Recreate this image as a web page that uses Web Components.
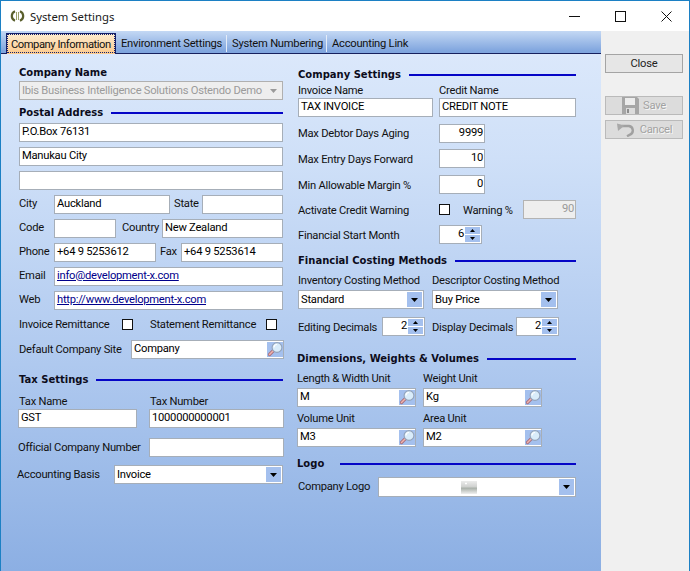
<!DOCTYPE html>
<html><head><meta charset="utf-8"><style>
html,body{margin:0;padding:0;height:100%;overflow:hidden}
body{font:11.2px Roboto,"Liberation Sans",Arial,sans-serif;color:#111}
f-lab.lift{margin-bottom:2px}
f-lab.drop{margin-top:2px}
</style></head><body>
<sys-window>
  <win-title slot="title">System Settings</win-title>
  <tab-bar slot="tabs">
    <tab-item active style="width:110px">Company Information</tab-item><tab-item style="width:111px">Environment Settings</tab-item><tab-item style="width:100px">System Numbering</tab-item><tab-item last style="width:90px">Accounting Link</tab-item>
  </tab-bar>
  <form-col slot="left" style="width:266px;margin-left:17px;padding-top:12px">
    <sec-head style="margin-left:1px">Company Name</sec-head>
    <f-row style="margin-top:2px"><combo-box disabled style="width:264px;margin-left:1px" value="Ibis Business Intelligence Solutions Ostendo Demo"></combo-box></f-row>
    <sec-head line style="margin-top:6px;margin-left:1px;width:264px" gap="8">Postal Address</sec-head>
    <f-row style="margin-top:4px"><text-field style="width:264px;margin-left:1px" value="P.O.Box 76131"></text-field></f-row>
    <f-row style="margin-top:5px"><text-field style="width:264px;margin-left:1px" value="Manukau City"></text-field></f-row>
    <f-row style="margin-top:5px"><text-field style="width:264px;margin-left:1px"></text-field></f-row>
    <f-row style="margin-top:5px"><f-lab class="lift" style="width:35px;margin-left:1px">City</f-lab><text-field style="width:116px" value="Auckland"></text-field><f-lab class="lift" style="width:28px;margin-left:4px">State</f-lab><text-field style="width:81px"></text-field></f-row>
    <f-row style="margin-top:5px"><f-lab class="lift" style="width:35px;margin-left:1px">Code</f-lab><text-field style="width:62px"></text-field><f-lab class="lift" style="width:40px;margin-left:6px">Country</f-lab><text-field style="width:121px" value="New Zealand"></text-field></f-row>
    <f-row style="margin-top:5px"><f-lab class="lift" style="width:35px;margin-left:1px">Phone</f-lab><text-field style="width:102px" value="+64 9 5253612"></text-field><f-lab class="lift" style="width:21px;margin-left:4px">Fax</f-lab><text-field style="width:102px" value="+64 9 5253614"></text-field></f-row>
    <f-row style="margin-top:5px"><f-lab class="lift" style="width:35px;margin-left:1px">Email</f-lab><text-field link style="width:229px" value="info@development-x.com"></text-field></f-row>
    <f-row style="margin-top:5px"><f-lab class="lift" style="width:35px;margin-left:1px">Web</f-lab><text-field link style="width:229px" value="http://www.development-x.com"></text-field></f-row>
    <f-row style="margin-top:5px"><f-lab style="width:103px;margin-left:1px">Invoice Remittance</f-lab><check-box></check-box><f-lab style="width:116px;margin-left:17px">Statement Remittance</f-lab><check-box></check-box></f-row>
    <f-row style="margin-top:6px"><f-lab style="width:112px;margin-left:1px">Default Company Site</f-lab><lookup-field style="width:153px" value="Company"></lookup-field></f-row>
    <sec-head line style="margin-top:14px;margin-left:1px;width:264px" gap="8">Tax Settings</sec-head>
    <f-row style="margin-top:8px;height:14px;margin-left:1px"><f-lab style="width:131px">Tax Name</f-lab><f-lab>Tax Number</f-lab></f-row>
    <f-row style="margin-top:1px"><text-field style="width:119px" value="GST"></text-field><text-field style="width:135px;margin-left:12px" value="1000000000001"></text-field></f-row>
    <f-row style="margin-top:10px"><f-lab style="width:131px">Official Company Number</f-lab><text-field style="width:135px"></text-field></f-row>
    <f-row style="margin-top:8px"><f-lab style="width:97px;margin-left:-1px">Accounting Basis</f-lab><combo-box style="width:169px" value="Invoice"></combo-box></f-row>
  </form-col>
  <form-col slot="right" style="width:280px;margin-left:14px;padding-top:14px">
    <sec-head line style="width:278px" gap="8">Company Settings</sec-head>
    <f-row style="margin-top:2px;height:14px"><f-lab style="width:141px">Invoice Name</f-lab><f-lab>Credit Name</f-lab></f-row>
    <f-row style="margin-top:1px"><text-field style="width:135px" value="TAX INVOICE"></text-field><text-field style="width:137px;margin-left:6px" value="CREDIT NOTE"></text-field></f-row>
    <f-row style="margin-top:7px"><f-lab style="width:141px">Max Debtor Days Aging</f-lab><text-field num style="width:46px" value="9999"></text-field></f-row>
    <f-row style="margin-top:6px"><f-lab class="drop" style="width:141px">Max Entry Days Forward</f-lab><text-field num style="width:46px" value="10"></text-field></f-row>
    <f-row style="margin-top:7px"><f-lab class="drop" style="width:141px">Min Allowable Margin %</f-lab><text-field num style="width:46px" value="0"></text-field></f-row>
    <f-row style="margin-top:6px"><f-lab class="drop" style="width:141px">Activate Credit Warning</f-lab><check-box></check-box><f-lab class="drop" style="width:60px;margin-left:13px">Warning %</f-lab><text-field num disabled style="width:53px" value="90"></text-field></f-row>
    <f-row style="margin-top:6px"><f-lab class="drop" style="width:141px">Financial Start Month</f-lab><spin-box style="width:43px" value="6"></spin-box></f-row>
    <sec-head line style="margin-top:10px;width:278px" gap="8">Financial Costing Methods</sec-head>
    <f-row style="margin-top:6px;height:14px"><f-lab style="width:134px">Inventory Costing Method</f-lab><f-lab>Descriptor Costing Method</f-lab></f-row>
    <f-row style="margin-top:3px"><combo-box style="width:126px" value="Standard"></combo-box><combo-box style="width:126px;margin-left:8px" value="Buy Price"></combo-box></f-row>
    <f-row style="margin-top:8px"><f-lab class="drop" style="width:84px">Editing Decimals</f-lab><spin-box style="width:43px" value="2"></spin-box><f-lab class="drop" style="width:84px;margin-left:7px">Display Decimals</f-lab><spin-box style="width:43px" value="2"></spin-box></f-row>
    <sec-head line style="margin-top:16px;width:279px;margin-left:-1px" gap="8">Dimensions, Weights &amp; Volumes</sec-head>
    <f-row style="margin-top:6px;height:14px;margin-left:-1px"><f-lab style="width:126px">Length &amp; Width Unit</f-lab><f-lab>Weight Unit</f-lab></f-row>
    <f-row style="margin-top:3px;margin-left:-1px"><lookup-field style="width:119px" value="M"></lookup-field><lookup-field style="width:119px;margin-left:7px" value="Kg"></lookup-field></f-row>
    <f-row style="margin-top:4px;height:14px;margin-left:-1px"><f-lab style="width:126px">Volume Unit</f-lab><f-lab>Area Unit</f-lab></f-row>
    <f-row style="margin-top:3px;margin-left:-1px"><lookup-field style="width:119px" value="M3"></lookup-field><lookup-field style="width:119px;margin-left:7px" value="M2"></lookup-field></f-row>
    <sec-head line style="margin-top:10px;width:279px;margin-left:-1px" gap="16">Logo</sec-head>
    <f-row style="margin-top:7px;height:20px"><f-lab class="lift" style="width:80px">Company Logo</f-lab><combo-box logo style="width:198px;height:20px"></combo-box></f-row>
  </form-col>
  <side-btn slot="side" style="margin-top:1px">Close</side-btn>
  <side-btn slot="side" disabled icon="save" style="margin-top:23px">Save</side-btn>
  <side-btn slot="side" disabled icon="undo" style="margin-top:5px">Cancel</side-btn>
</sys-window>
<script>
const FONT='Roboto,"Liberation Sans",Arial,sans-serif';
const FS='11.2px ';
const LS='letter-spacing:-.25px;';
function def(name,css,html){
  class C extends HTMLElement{
    constructor(){super();this.attachShadow({mode:'open'});this._h=html;this._c=css;}
    connectedCallback(){const h=this._h;this.shadowRoot.innerHTML='<style>'+this._c+'</style>'+(typeof h==='function'?h(this):h);}
  }
  customElements.define(name,C);
}
const mag='<svg width="16" height="15" viewBox="0 0 16 15"><rect width="16" height="15" fill="#a4c0ee"/><path d="M6.5 8.5L2.5 12.5" stroke="#a8707e" stroke-width="3.2" stroke-linecap="round"/><path d="M6.5 8.5L2.5 12.5" stroke="#f2b4ac" stroke-width="1.5" stroke-linecap="round"/><circle cx="10" cy="5.5" r="4.9" fill="#d9ecfa" stroke="#93a3ba" stroke-width="1.1"/><path d="M7 5.5a3 3 0 0 1 3-3" stroke="#fff" fill="none" stroke-width="1.2"/></svg>';
const arrow='<svg width="7" height="4" viewBox="0 0 7 4"><path d="M0 0h7L3.5 4z" fill="#000"/></svg>';
const BOX=':host{display:block;flex:none;height:19px;box-sizing:border-box;border:1px solid #a6aeb8;background:#fff;font:'+FS+FONT+';'+LS+'color:#000;overflow:hidden}';
const val=h=>h.getAttribute('value')||'';
def('sys-window',
 ':host{display:block;box-sizing:border-box;width:690px;height:571px;border:1px solid #1c80c4;border-bottom:0;background:#fff;overflow:hidden}'+
 '.body{display:flex;height:540px}.main{width:600px;flex:none;display:flex;flex-direction:column}'+
 '.panel{flex:1;display:flex;background:linear-gradient(#dbe8fb 0,#cfe0f8 20%,#afc9ef 60%,#8cafe3 100%)}'+
 '.side{flex:1;background:#f0f0f0;padding:22px 0 0 4px}',
 '<slot name="title"></slot><div class="body"><div class="main"><slot name="tabs"></slot><div class="panel"><slot name="left"></slot><slot name="right"></slot></div></div><div class="side"><slot name="side"></slot></div></div>');
def('win-title',
 ':host{display:flex;align-items:center;height:30px;font:11.3px "Noto Sans","Liberation Sans",sans-serif;color:#1a1a1a}'+
 '.ic{margin:0 5px 0 9px;display:block}.t{flex:1}.b{width:46px;height:30px;display:flex;align-items:center;justify-content:center}',
 '<svg class="ic" width="15" height="14" viewBox="0 0 15 14"><path d="M5 2.2A5.2 5.2 0 0 0 5 11.8M10 2.2A5.2 5.2 0 0 1 10 11.8" fill="none" stroke="#5a5f2c" stroke-width="2.2"/><path d="M6.5 3v8M8.5 3v8" stroke="#9ba06a" stroke-width="1"/></svg><span class="t"><slot></slot></span>'+
 '<span class="b"><svg width="11" height="11"><path d="M0 5.5h11" stroke="#111"/></svg></span><span class="b"><svg width="11" height="11"><rect x=".5" y=".5" width="10" height="10" fill="none" stroke="#111"/></svg></span><span class="b"><svg width="11" height="11"><path d="M.5.5l10 10M10.5.5l-10 10" stroke="#111"/></svg></span>');
def('tab-bar',
 ':host{display:flex;flex:none;height:23px;box-sizing:border-box;padding:2px 0 0 5px;background:linear-gradient(#c4d8f4,#7fa5de 92%);border-bottom:1px solid #16205e;box-shadow:0 1px 0 #efd9c0}',
 '<slot></slot>');
def('tab-item',
 ':host{display:block;flex:none;box-sizing:border-box;padding:3px 0 0 5px;font:'+FS+FONT+';'+LS+'color:#111;white-space:nowrap;border-right:1px solid #e4ecf8;height:17px;margin-top:2px;line-height:12px}'+
 ':host([last]){border-right:0}'+
 ':host([active]){letter-spacing:-.45px;margin-top:0;height:21px;border:1px solid #14206a;border-bottom:0;outline:1px dotted #14206a;outline-offset:-2px;background:linear-gradient(#fdeccf,#fcc98c);padding:5px 0 0 4px;position:relative;z-index:1}',
 '<slot></slot>');
def('form-col',':host{display:block;flex:none}','<slot></slot>');
def('f-row',':host{display:flex;align-items:center;height:19px}','<slot></slot>');
def('f-lab',':host{display:block;flex:none;font:'+FS+FONT+';'+LS+'color:#111;white-space:nowrap}','<slot></slot>');
def('sec-head',
 ':host{display:flex;align-items:center;font:bold 10px "DejaVu Sans",sans-serif;color:#0c0c1c;height:13px;white-space:nowrap}'+
 '.l{flex:1;height:2px;background:#0505c6;display:none}:host([line]) .l{display:block}',
 h=>'<span><slot></slot></span><span class="l" style="margin-left:'+(h.getAttribute('gap')||8)+'px"></span>');
def('text-field',BOX+'.v{padding:0 2px;line-height:16px;white-space:nowrap}:host([num]) .v{text-align:right;padding-right:1px}'+
 ':host([link]) .v{color:#00008b;text-decoration:underline}:host([disabled]){background:#eee;border-color:#b3b3b3;color:#999}',
 h=>'<div class="v">'+val(h)+'</div>');
def('lookup-field',BOX+':host{display:flex}.v{flex:1;padding:0 2px;line-height:16px;white-space:nowrap}svg{display:block;flex:none;margin-top:1px}',
 h=>'<div class="v">'+val(h)+'</div>'+mag);
def('combo-box',BOX+':host{display:flex}.v{flex:1;min-width:0;padding:0 2px;line-height:17px;white-space:nowrap}.b{flex:none;width:15px;margin:1px 1px 1px 0;background:#a4c0ee;display:flex;align-items:center;justify-content:center}'+
 ':host([disabled]){background:#eee;border-color:#b0b0b0;color:#9b9b9b}:host([disabled]) .b{background:transparent}:host([disabled]) path{fill:#9a9a9a}'+
 '.logo{flex:1;display:flex;align-items:center;justify-content:center}',
 h=>(h.hasAttribute('logo')?'<div class="logo"><svg width="16" height="13" viewBox="0 0 16 13"><defs><linearGradient id="g" x1="0" y1="0" x2="0" y2="1"><stop offset="0" stop-color="#ececec"/><stop offset=".45" stop-color="#cfd1cf"/><stop offset=".55" stop-color="#a9b0a9"/><stop offset="1" stop-color="#f0f0f0"/></linearGradient></defs><rect width="16" height="13" fill="url(#g)"/><path d="M4 2.5h2M5 1.5v2" stroke="#fff"/></svg></div>':'<div class="v">'+val(h)+'</div>')+'<div class="b">'+arrow+'</div>');
def('spin-box',BOX+':host{display:flex}.v{flex:1;text-align:right;padding-right:1px;line-height:15px}.s{flex:none;width:15px;margin:1px 1px 1px 0;display:flex;flex-direction:column;gap:1px}.s i{flex:1;background:#a4c0ee;display:flex;align-items:center;justify-content:center}',
 h=>'<div class="v">'+val(h)+'</div><div class="s"><i><svg width="5" height="3"><path d="M2.5 0L5 3H0z"/></svg></i><i><svg width="5" height="3"><path d="M0 0h5L2.5 3z"/></svg></i></div>');
def('check-box',':host{display:block;flex:none;width:9px;height:9px;border:1px solid #111;background:#fff}','');
const ICONS={save:'<svg width="17" height="17" viewBox="0 0 17 17"><path d="M0 0h15l2 2v15H0z" fill="#a6a6a6"/><rect x="3" y="1" width="10" height="7" fill="#ececec"/><rect x="4" y="11" width="9" height="6" fill="#dcdcdc"/><rect x="5" y="12" width="2" height="4" fill="#8d8d8d"/></svg>',
 undo:'<svg width="20" height="15" viewBox="0 0 20 15"><path d="M6 4h7a4.5 4.5 0 0 1 1 8.6l-3 1.6" fill="none" stroke="#a0a0a0" stroke-width="2.4"/><path d="M1 1.5l1 7.5 6.5-5.5z" fill="#a8a8a8"/></svg>'};
def('side-btn',
 ':host{display:flex;align-items:center;justify-content:center;gap:4px;width:78px;height:19px;box-sizing:border-box;border:1px solid #a4a4a4;background:#e6e6e6;font:'+FS+FONT+';'+LS+'color:#222}'+
 ':host([disabled]){background:#dcdcdc;border-color:#bababa;color:#a2a2a2;text-shadow:1px 1px 0 #f6f6f6}svg{display:block}',
 h=>(ICONS[h.getAttribute('icon')]||'')+'<slot></slot>');
</script>
</body></html>
